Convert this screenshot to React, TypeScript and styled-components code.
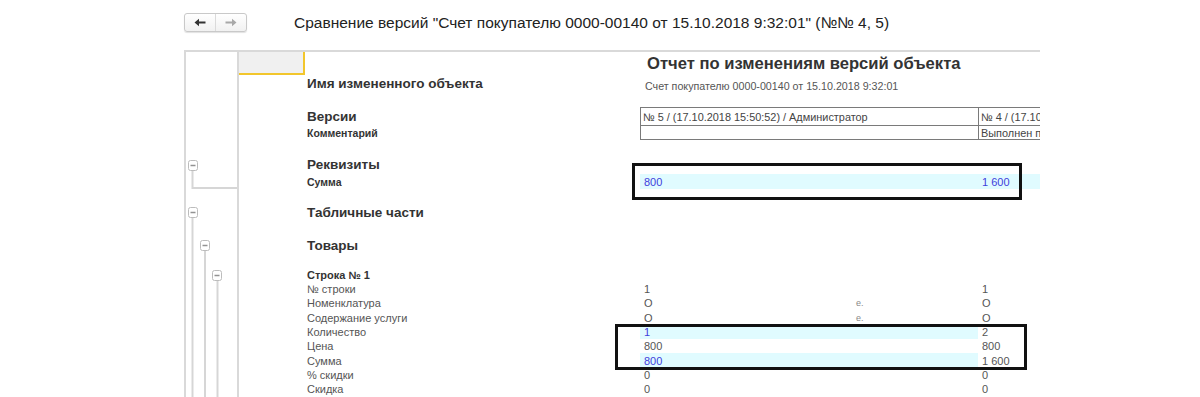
import React from 'react'
import styled, { createGlobalStyle } from 'styled-components'

const GlobalStyle = createGlobalStyle`
  html, body {
    margin: 0;
    padding: 0;
    background: #fff;
  }
  body {
    font-family: "Liberation Sans", Arial, sans-serif;
    overflow: hidden;
  }
`

// header
const Page = styled.div`
  width: 1200px;
  height: 397px;
  overflow: hidden;
  background: #fff;
`

const Header = styled.div`
  height: 50px;
  box-sizing: border-box;
  padding: 13px 0 0 184px;
  display: flex;
  align-items: flex-start;
`

const NavGroup = styled.div`
  display: flex;
  height: 19px;
  box-sizing: border-box;
  border: 1px solid #c9c9c9;
  border-radius: 3px;
  background: linear-gradient(#ffffff, #f1f1f1);
  box-shadow: 0 1px 1px rgba(0, 0, 0, 0.12);
`

const NavButton = styled.div<{ $divider?: boolean }>`
  width: 30px;
  display: flex;
  align-items: center;
  justify-content: center;
  border-left: ${p => (p.$divider ? '1px solid #dadada' : 'none')};
`

const Title = styled.div`
  margin-left: 47px;
  line-height: 19px;
  font-size: 15.5px;
  color: #222;
  white-space: nowrap;
`

// report panel
const Panel = styled.div`
  margin-left: 184px;
  width: 856px;
  height: 347px;
  box-sizing: border-box;
  display: flex;
  border-top: 2px solid #d9d9d9;
  border-left: 2px solid #d9d9d9;
  overflow: hidden;
`

const Gutter = styled.div`
  width: 51px;
  flex-shrink: 0;
  border-right: 2px solid #d9d9d9;
`

const Sheet = styled.div`
  position: relative;
  flex: 1;
  min-width: 0;
`

const Row = styled.div<{ $h: number; $mt?: number }>`
  display: grid;
  grid-template-columns: 401px 338px 1fr;
  height: ${p => p.$h}px;
  margin-top: ${p => p.$mt ?? 0}px;
`

type LabelKind = 'section' | 'sub' | 'strong' | 'plain'

const Label = styled.div<{ $kind: LabelKind }>`
  display: flex;
  align-items: center;
  padding-left: 68px;
  white-space: nowrap;
  color: ${p => (p.$kind === 'plain' ? '#555' : '#333')};
  font-weight: ${p => (p.$kind === 'plain' ? 400 : 700)};
  font-size: ${p =>
    p.$kind === 'section' ? '13.5px' : p.$kind === 'sub' ? '10.5px' : '11px'};
`

const SelectedCell = styled.div`
  width: 66px;
  box-sizing: border-box;
  background: #f0f0f0;
  border-right: 2px solid #f2c62c;
  border-bottom: 2px solid #f2c62c;
`

const ReportTitle = styled.div`
  grid-column: 2 / 4;
  display: flex;
  align-items: center;
  padding-left: 7px;
  font-size: 16.6px;
  font-weight: 700;
  color: #333;
  white-space: nowrap;
`

const Subtitle = styled.div`
  grid-column: 2 / 4;
  padding: 5px 0 0 5px;
  font-size: 10.7px;
  color: #555;
  white-space: nowrap;
`

const VersionCell = styled.div<{ $first?: boolean }>`
  display: flex;
  align-items: center;
  padding-left: 2px;
  font-size: 10.9px;
  color: #444;
  white-space: nowrap;
  overflow: hidden;
  border-left: 1px solid #7a7a7a;
  border-bottom: 1px solid #7a7a7a;
  border-top: ${p => (p.$first ? '1px solid #7a7a7a' : 'none')};
`

const Value = styled.div<{ $hl?: boolean; $blue?: boolean }>`
  display: grid;
  grid-template-columns: 212px 1fr;
  align-items: center;
  padding-left: 4px;
  font-size: 11px;
  white-space: nowrap;
  overflow: hidden;
  color: ${p => (p.$blue ? '#4040dc' : '#555')};
  background: ${p => (p.$hl ? '#e0fbff' : 'transparent')};
`

const Tail = styled.span`
  font-size: 9px;
  color: #888;
`

const Frame = styled.div<{ $top: number; $left: number; $w: number; $h: number }>`
  position: absolute;
  top: ${p => p.$top}px;
  left: ${p => p.$left}px;
  width: ${p => p.$w}px;
  height: ${p => p.$h}px;
  box-sizing: border-box;
  border: 3px solid #111;
  pointer-events: none;
`

const Arrow = ({ dir, color }: { dir: 'left' | 'right'; color: string }) => (
  <svg width="12" height="9" viewBox="0 0 12 9">
    <path
      d="M0.5 4.5 L5 0.8 L5 3.5 L11.5 3.5 L11.5 5.5 L5 5.5 L5 8.2 Z"
      fill={color}
      transform={dir === 'right' ? 'translate(12 0) scale(-1 1)' : undefined}
    />
  </svg>
)

const MinusBox = ({ x, y }: { x: number; y: number }) => (
  <g>
    <rect x={x + 0.5} y={y + 0.5} width="9" height="10" rx="2" fill="#fff" stroke="#bcbcbc" />
    <line x1={x + 2.5} x2={x + 7.5} y1={y + 5.5} y2={y + 5.5} stroke="#939393" strokeWidth="1.5" />
  </g>
)

// outline of groups, drawn in the left gutter
const TreeLines = () => (
  <svg width="51" height="345" viewBox="0 0 51 345">
    <g stroke="#d6d6d6" strokeWidth="2" fill="none">
      <path d="M6.5 118 V136 H51" />
      <path d="M6.5 165 V345" />
      <path d="M19 198 V345" />
      <path d="M31.5 229 V345" />
    </g>
    <MinusBox x={2} y={108} />
    <MinusBox x={2} y={155} />
    <MinusBox x={14} y={188} />
    <MinusBox x={26} y={218} />
  </svg>
)

type LineRow = { label: string; a: string; b: string; tail?: string; hl?: boolean }

const lineRows: LineRow[] = [
  { label: '№ строки', a: '1', b: '1' },
  { label: 'Номенклатура', a: 'О', b: 'О', tail: 'е.' },
  { label: 'Содержание услуги', a: 'О', b: 'О', tail: 'е.' },
  { label: 'Количество', a: '1', b: '2', hl: true },
  { label: 'Цена', a: '800', b: '800' },
  { label: 'Сумма', a: '800', b: '1 600', hl: true },
  { label: '% скидки', a: '0', b: '0' },
  { label: 'Скидка', a: '0', b: '0' },
]

const App = () => {
  return (
    <Page>
      <GlobalStyle />
      <Header>
        <NavGroup>
          <NavButton>
            <Arrow dir="left" color="#333" />
          </NavButton>
          <NavButton $divider>
            <Arrow dir="right" color="#a8a8a8" />
          </NavButton>
        </NavGroup>
        <Title>Сравнение версий "Счет покупателю 0000-00140 от 15.10.2018 9:32:01" (№№ 4, 5)</Title>
      </Header>

      <Panel>
        <Gutter>
          <TreeLines />
        </Gutter>
        <Sheet>
          <Row $h={23}>
            <SelectedCell />
            <ReportTitle>Отчет по изменениям версий объекта</ReportTitle>
          </Row>
          <Row $h={17}>
            <Label $kind="section">Имя измененного объекта</Label>
            <Subtitle>Счет покупателю 0000-00140 от 15.10.2018 9:32:01</Subtitle>
          </Row>

          <Row $h={19} $mt={15}>
            <Label $kind="section">Версии</Label>
            <VersionCell $first>№ 5 / (17.10.2018 15:50:52) / Администратор</VersionCell>
            <VersionCell $first>№ 4 / (17.10</VersionCell>
          </Row>
          <Row $h={14}>
            <Label $kind="sub">Комментарий</Label>
            <VersionCell />
            <VersionCell>Выполнен п</VersionCell>
          </Row>

          <Row $h={14} $mt={17}>
            <Label $kind="section">Реквизиты</Label>
          </Row>
          <Row $h={15} $mt={3}>
            <Label $kind="sub">Сумма</Label>
            <Value $hl $blue>800</Value>
            <Value $hl $blue>1 600</Value>
          </Row>

          <Row $h={14} $mt={16}>
            <Label $kind="section">Табличные части</Label>
          </Row>
          <Row $h={14} $mt={19}>
            <Label $kind="section">Товары</Label>
          </Row>
          <Row $h={14} $mt={16}>
            <Label $kind="strong">Строка № 1</Label>
          </Row>
          {lineRows.map(r => (
            <Row key={r.label} $h={14.3}>
              <Label $kind="plain">{r.label}</Label>
              <Value $hl={r.hl} $blue={r.hl}>
                <span>{r.a}</span>
                {r.tail && <Tail>{r.tail}</Tail>}
              </Value>
              <Value>{r.b}</Value>
            </Row>
          ))}

          <Frame $top={111} $left={393} $w={390} $h={37} />
          <Frame $top={272} $left={376} $w={412} $h={46} />
        </Sheet>
      </Panel>
    </Page>
  )
}

export default App
